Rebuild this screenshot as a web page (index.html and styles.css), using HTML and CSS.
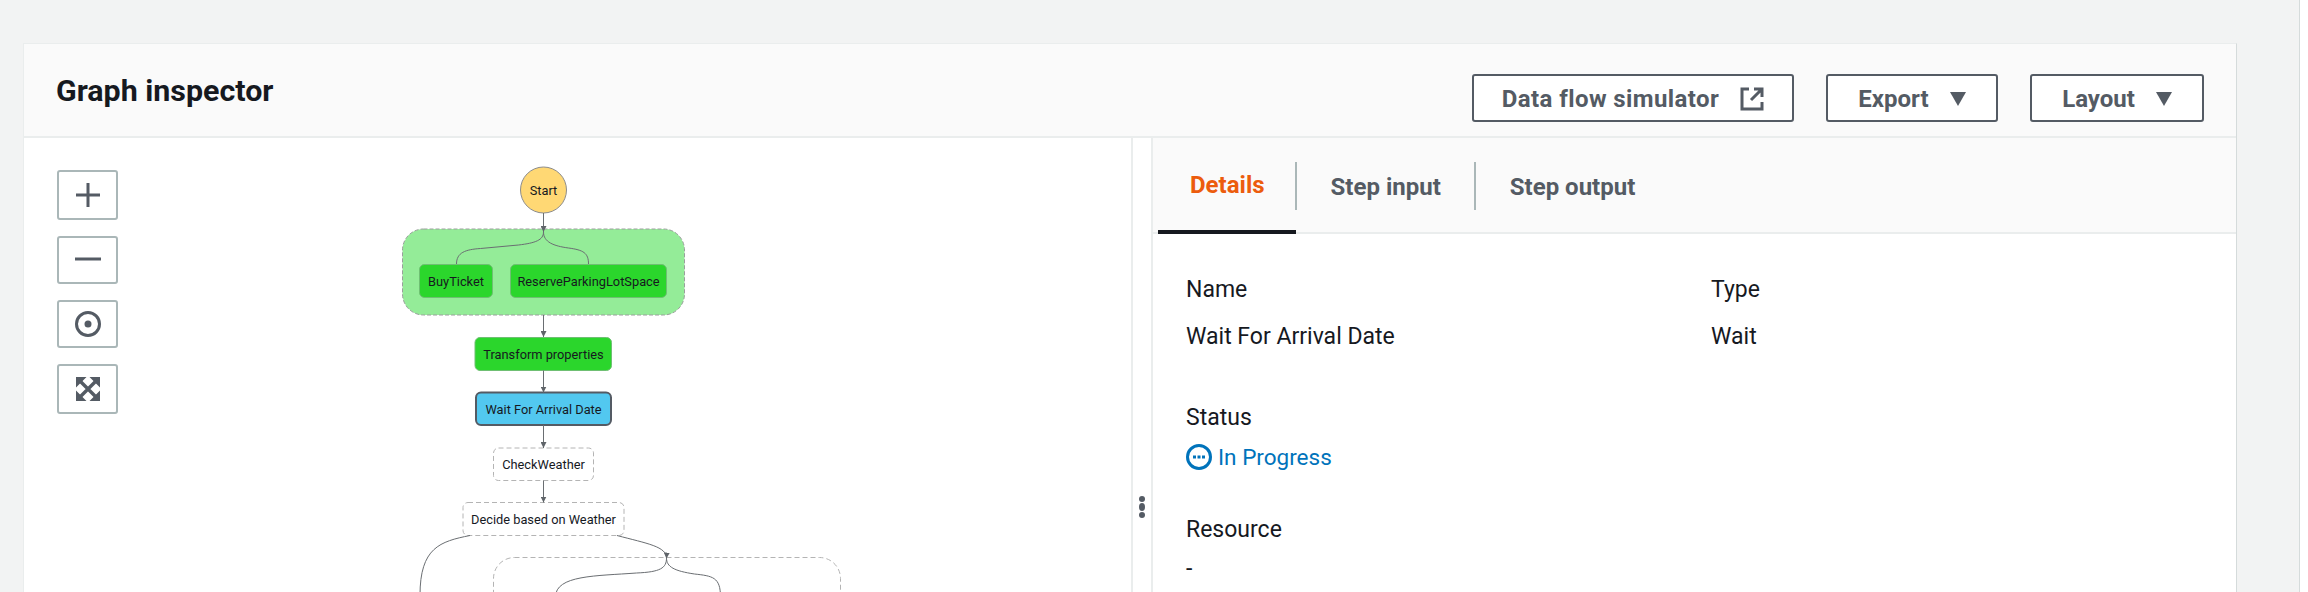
FILE: index.html
```html
<!DOCTYPE html>
<html lang="en">

<head>
  <meta charset="UTF-8">
  <meta name="viewport" content="width=device-width, initial-scale=1.0">
  <title>Graph inspector</title>
  <link rel="stylesheet" href="styles.css">
</head>

<body>
  <div class="page">
    <section class="card">
      <header class="card-header">
        <h2 class="card-title">Graph inspector</h2>
        <div class="actions">
          <button class="btn btn-sim">Data flow simulator
            <svg class="icon-ext" width="24" height="24" viewBox="0 0 24 24">
              <path d="M9 2H2v20h20v-7" />
              <path d="M14 2h8v8M22 2 11 13" />
            </svg>
          </button>
          <button class="btn btn-export">Export <span class="caret"></span></button>
          <button class="btn btn-layout">Layout <span class="caret"></span></button>
        </div>
      </header>

      <div class="card-body">
        <div class="graph-pane">
          <svg class="graph" viewBox="24 138 1107 454" width="1107" height="454">
            <defs>
              <marker id="arrow" markerWidth="6" markerHeight="6" refX="6" refY="3" orient="auto"
                markerUnits="userSpaceOnUse" viewBox="0 0 6 6">
                <path d="M0 0l6 3-6 3z" fill="#5f6469" />
              </marker>
            </defs>

            <!-- upper parallel state -->
            <rect class="group-done" x="402.500" y="229" width="282" height="86" rx="21" />
            <rect class="node-done" x="419.500" y="264.500" width="73" height="33" rx="5" />
            <rect class="node-done" x="510.500" y="264.500" width="156" height="33" rx="5" />
            <rect class="node-done" x="475" y="337.500" width="136.500" height="33" rx="5" />
            <rect class="node-current" x="476" y="392.500" width="135" height="32.500" rx="5" />
            <rect class="node-todo" x="493.500" y="448" width="100" height="32.500" rx="5" />
            <rect class="node-todo" x="463" y="502.500" width="161" height="33" rx="5" />
            <rect class="group-todo" x="493.500" y="557.500" width="347" height="80" rx="21" />

            <circle class="node-start" cx="543.500" cy="190" r="23" />

            <path class="edge" marker-end="url(#arrow)" d="M543.500 213v19" />
            <path class="edge" d="M543.500 232c0 8-8 11-25 13l-38 3.500c-15 1-24 4-24 15.500" />
            <path class="edge" d="M543.500 232c0 10 10 14 25 16 15 2 20 5 20 16" />
            <path class="edge" marker-end="url(#arrow)" d="M543.500 315v22" />
            <path class="edge" marker-end="url(#arrow)" d="M543.500 370.500v22" />
            <path class="edge" marker-end="url(#arrow)" d="M543.500 425v23" />
            <path class="edge" marker-end="url(#arrow)" d="M543.500 480.500v22" />
            <path class="edge" d="M470 535.500c-30 6-50 12-50 60" />
            <path class="edge" marker-end="url(#arrow)" d="M617 535.500c30 8 50 11 49.500 23" />
            <path class="edge" d="M666.500 558c0 10-6 14-30 15-40 3-81 2-81 24" />
            <path class="edge" d="M666.500 558c0 9 8 13 28 16 18 2 26 3 26 23" />

            <text class="node-label" x="543.500" y="194.500">Start</text>
            <text class="node-label" x="456" y="285.500">BuyTicket</text>
            <text class="node-label" x="588.500" y="285.500">ReserveParkingLotSpace</text>
            <text class="node-label" x="543.500" y="358.500">Transform properties</text>
            <text class="node-label" x="543.500" y="413.500">Wait For Arrival Date</text>
            <text class="node-label" x="543.500" y="468.500">CheckWeather</text>
            <text class="node-label" x="543.500" y="523.500">Decide based on Weather</text>
          </svg>

          <div class="zoom-controls">
            <button class="ctl ctl-plus">
              <svg width="24" height="24" viewBox="0 0 24 24">
                <path class="ctl-stroke" d="M12 0v24M0 12h24" />
              </svg>
            </button>
            <button class="ctl ctl-minus">
              <svg width="26" height="24" viewBox="0 0 26 24">
                <path class="ctl-stroke" d="M0 11h26" />
              </svg>
            </button>
            <button class="ctl ctl-center">
              <svg width="26" height="26" viewBox="0 0 26 26">
                <circle cx="13" cy="13" r="11.500" fill="none" stroke="#545b64" stroke-width="3" />
                <circle cx="13" cy="13" r="3.500" fill="#545b64" />
              </svg>
            </button>
            <button class="ctl ctl-fit">
              <svg width="24" height="24" viewBox="0 0 24 24">
                <path fill="#545b64" d="M0 0h10.500L0 10.500zM24 0v10.500L13.500 0zM0 24V13.500L10.500 24zM24 24H13.500L24 13.500z" />
                <path fill="none" stroke="#545b64" stroke-width="3.400" d="M4 4l16 16M20 4 4 20" />
              </svg>
            </button>
          </div>
        </div>

        <div class="splitter">
          <span class="grip"></span>
          <span class="grip grip-mid"></span>
          <span class="grip"></span>
        </div>

        <div class="detail-pane">
          <nav class="tabs">
            <a class="tab tab-active">Details</a>
            <a class="tab tab-sep">Step input</a>
            <a class="tab tab-sep">Step output</a>
          </nav>
          <div class="detail-body">
            <div class="field-grid">
              <div class="field">
                <div class="field-label">Name</div>
                <div class="field-value">Wait For Arrival Date</div>
              </div>
              <div class="field">
                <div class="field-label">Type</div>
                <div class="field-value">Wait</div>
              </div>
            </div>
            <div class="field">
              <div class="field-label">Status</div>
              <div class="field-value status">
                <svg width="26" height="26" viewBox="0 0 26 26">
                  <circle cx="13" cy="13" r="11.500" fill="none" stroke="#0073bb" stroke-width="3" />
                  <path fill="#0073bb" d="M7 11.500h3v3H7zM11.500 11.500h3v3h-3zM16 11.500h3v3h-3z" />
                </svg>
                In Progress
              </div>
            </div>
            <div class="field">
              <div class="field-label">Resource</div>
              <div class="field-value">-</div>
            </div>
          </div>
        </div>
      </div>
    </section>
  </div>
</body>

</html>
```

FILE: styles.css
```css
html,
body {
  height: 100%;
}

body {
  margin: 0;
  background: #fff;
  font-family: Roboto, "Noto Sans", sans-serif;
  color: #16191f;
  overflow: hidden;
}

.page {
  box-sizing: border-box;
  width: 2300px;
  height: 592px;
  padding: 43px 0 0 23px;
  background: #f2f3f3;
  border-right: 1px solid #d5dbdb;
  overflow: hidden;
}

.card {
  box-sizing: border-box;
  width: 2214px;
  height: 560px;
  background: #fff;
  border: 1px solid #eaeded;
  border-right-color: #d5dbdb;
}

.card-header {
  box-sizing: border-box;
  height: 94px;
  display: flex;
  justify-content: space-between;
  padding: 30px 32px 0 32px;
  background: #fafafa;
  border-bottom: 2px solid #eaeded;
}

.card-title {
  margin: 0;
  font-size: 30.4px;
  line-height: 34px;
  font-weight: 700;
}

.actions {
  display: flex;
  gap: 32px;
}

.btn {
  box-sizing: border-box;
  height: 48px;
  display: flex;
  align-items: center;
  justify-content: center;
  margin: 0;
  padding: 1px 0 0;
  background: #fff;
  border: 2px solid #545b64;
  border-radius: 3px;
  color: #545b64;
  font-family: inherit;
  font-size: 24px;
  font-weight: 700;
}

.btn-sim {
  width: 322px;
  gap: 21px;
  letter-spacing: 0.4px;
}

.btn-export {
  width: 172px;
  gap: 21px;
}

.btn-layout {
  width: 174px;
  gap: 21px;
}

.icon-ext {
  fill: none;
  stroke: #545b64;
  stroke-width: 3;
}

.caret {
  width: 0;
  height: 0;
  border-left: 8.5px solid transparent;
  border-right: 8.5px solid transparent;
  border-top: 14px solid #545b64;
}

.card-body {
  display: flex;
  height: 464px;
}

.graph-pane {
  position: relative;
  width: 1107px;
  flex: none;
  overflow: hidden;
}

.graph {
  position: absolute;
  top: 0;
  left: 0;
}

.group-done {
  fill: #94ec98;
  stroke: #9a9f9c;
  stroke-dasharray: 4 2;
}

.group-todo {
  fill: #fff;
  stroke: #b4b4b4;
  stroke-dasharray: 5 3;
}

.node-done {
  fill: #2bd62c;
  stroke: #6fbf73;
}

.node-current {
  fill: #52c8f0;
  stroke: #545b64;
  stroke-width: 2;
}

.node-todo {
  fill: #fff;
  stroke: #b4b4b4;
  stroke-dasharray: 5 3;
}

.node-start {
  fill: #ffd874;
  stroke: #8c8c8c;
}

.edge {
  fill: none;
  stroke: #6a6e72;
  stroke-width: 1;
}

.node-label {
  font-size: 12.8px;
  text-anchor: middle;
  fill: #16191f;
}

.zoom-controls {
  position: absolute;
  top: 32px;
  left: 33px;
  display: flex;
  flex-direction: column;
  gap: 16px;
}

.ctl {
  box-sizing: border-box;
  width: 61px;
  height: 48px;
  display: flex;
  align-items: center;
  justify-content: center;
  padding: 0;
  background: #fff;
  border: 2px solid #aab7b8;
  border-radius: 3px;
}

.ctl-plus,
.ctl-fit {
  height: 50px;
}

.ctl-stroke {
  fill: none;
  stroke: #545b64;
  stroke-width: 3;
}

.splitter {
  box-sizing: border-box;
  width: 22px;
  flex: none;
  display: flex;
  flex-direction: column;
  align-items: center;
  gap: 1px;
  padding-top: 358px;
  background: #fff;
  border-left: 2px solid #eaeded;
  border-right: 2px solid #eaeded;
}

.grip {
  width: 6px;
  height: 6px;
  border-radius: 50%;
  background: #545b64;
}

.grip-mid {
  height: 8px;
}

.detail-pane {
  flex: 1;
}

.tabs {
  box-sizing: border-box;
  height: 96px;
  display: flex;
  padding: 0 0 0 5px;
  background: #fafafa;
  border-bottom: 2px solid #eaeded;
}

.tab {
  box-sizing: border-box;
  height: 96px;
  position: relative;
  display: flex;
  align-items: center;
  padding: 2px 34px 0 35px;
  color: #545b64;
  font-size: 24px;
  font-weight: 700;
}

.tab-active {
  padding: 2px 31px 0 32px;
  color: #ec5c0d;
  border-bottom: 4px solid #16191f;
}

.tab-sep::before {
  content: "";
  position: absolute;
  left: -1px;
  top: 24px;
  width: 2px;
  height: 48px;
  background: #aab7b8;
}

.detail-body {
  padding: 40px 33px 0;
  font-size: 23px;
  line-height: 32px;
}

.field-grid {
  display: grid;
  grid-template-columns: 525px 1fr;
  margin-bottom: 9px;
}

.field {
  margin-bottom: 40px;
}

.field-label {
  margin-bottom: 7px;
}

.field-grid .field-label {
  margin-bottom: 15px;
}

.status {
  display: flex;
  align-items: center;
  gap: 6px;
  margin-bottom: 41px;
  color: #0073bb;
  font-size: 22.5px;
}
```
